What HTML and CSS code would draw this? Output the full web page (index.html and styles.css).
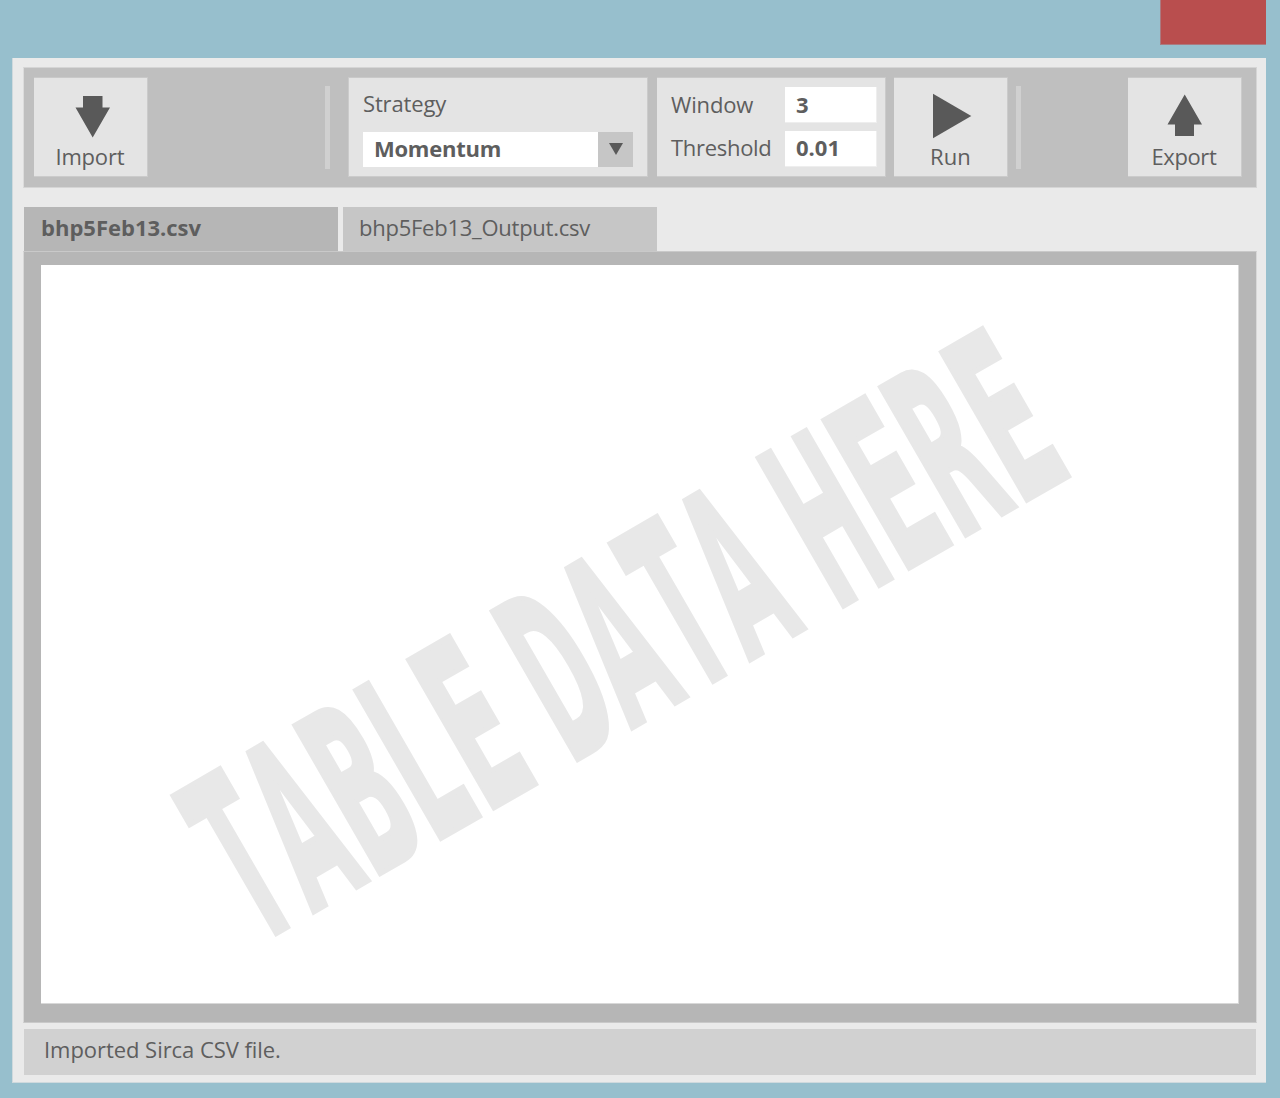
FILE: index.html
```
<!DOCTYPE html>
<html lang="en">
<head>
<meta charset="utf-8">
<title>Strategy runner</title>
<link rel="stylesheet" href="styles.css">
</head>
<body>
<header class="titlebar"><div class="close"></div></header>
<main class="window">
  <section class="toolbar">
    <div class="action import">
      <svg class="icon" width="114" height="62" viewBox="0 0 114 62"><path d="M49 18H68.500V29.500H76L58.700 59.500L41.500 29.500H49Z"/></svg>
      <span class="caption">Import</span>
    </div>
    <div class="divider first"></div>
    <div class="strategy">
      <label class="label">Strategy</label>
      <div class="select">
        <span class="value">Momentum</span>
        <span class="arrow"><svg class="icon" width="35" height="35" viewBox="0 0 35 35"><path d="M11 11H25L18 23Z"/></svg></span>
      </div>
    </div>
    <div class="params">
      <label class="label window-label">Window</label><div class="field">3</div>
      <label class="label threshold-label">Threshold</label><div class="field">0.01</div>
    </div>
    <div class="action run">
      <svg class="icon" width="113" height="62" viewBox="0 0 113 62"><path d="M39 15.700L77.300 38L39 60.300Z"/></svg>
      <span class="caption">Run</span>
    </div>
    <div class="divider second"></div>
    <div class="action export">
      <svg class="icon" width="113" height="62" viewBox="0 0 113 62"><path d="M56.700 16.500L74 46.500H66V58H47V46.500H39.500Z"/></svg>
      <span class="caption">Export</span>
    </div>
  </section>
  <nav class="tabs">
    <div class="tab active">bhp5Feb13.csv</div>
    <div class="tab output">bhp5Feb13_Output.csv</div>
  </nav>
  <section class="panel">
    <div class="sheet">
      <svg class="watermark" viewBox="41 265 1198 738" width="1198" height="738">
        <g transform="translate(256.3 947.3) rotate(-30)">
          <text transform="translate(1.600 -2) scale(0.850 2.342)">T</text>
          <text transform="translate(65.700 -2) scale(0.860 2.342)">A</text>
          <text transform="translate(134.300 -2) scale(0.935 2.342)">B</text>
          <text transform="translate(204.700 -2) scale(0.915 2.342)">L</text>
          <text transform="translate(265.100 -2) scale(0.979 2.342)">E</text>
          <text transform="translate(363 -2) scale(0.833 2.342)">D</text>
          <text transform="translate(433.600 -2) scale(0.860 2.342)">A</text>
          <text transform="translate(506.200 -2) scale(0.850 2.342)">T</text>
          <text transform="translate(569.800 -2) scale(0.860 2.342)">A</text>
          <text transform="translate(669.800 -2) scale(0.888 2.342)">H</text>
          <text transform="translate(744.600 -2) scale(0.979 2.342)">E</text>
          <text transform="translate(810.900 -2) scale(0.910 2.342)">R</text>
          <text transform="translate(880.700 -2) scale(0.979 2.342)">E</text>
        </g>
      </svg>
    </div>
  </section>
  <footer class="status">Imported Sirca CSV file.</footer>
</main>
</body>
</html>
```
FILE: styles.css
```
* { box-sizing: border-box; }
body {
  margin: 0;
  height: 1098px;
  background: #97bfcd;
  color: #5e5e5e;
  font: 22px/30px "Open Sans", "Noto Sans", sans-serif;
}
.titlebar { display: flex; justify-content: flex-end; height: 58px; padding-right: 14px; }
.close {
  width: 106px;
  height: 45px;
  background: #b94e4e;
  border: solid #ab7a80;
  border-width: 0 0 1px 1px;
}
.window {
  display: flex;
  flex-direction: column;
  width: 1254px;
  height: 1025px;
  margin-left: 12px;
  padding: 9px 9px 7px 11px;
  background: #eaeaea;
  border: solid #cfd9dd;
  border-width: 0 0 1px 1px;
}
.toolbar {
  display: flex;
  height: 121px;
  padding: 10px 14px 10px 10px;
  background: #bfbfbf;
  border: 1px solid #d5d5d5;
  border-left-color: #dcdcdc;
  margin-left: -1px;
}
.action, .strategy, .params {
  flex: none;
  height: 99px;
  background: #e4e4e4;
  border: solid #cbcbcb;
  border-width: 0 1px 1px 0;
  box-shadow: 0 -1px #c9c9c9;
}
.action { display: flex; flex-direction: column; width: 114px; }
.icon { display: block; fill: #595959; }
.caption { margin-top: 1px; white-space: nowrap; }
.import .caption { padding-left: 21.5px; letter-spacing: -0.2px; }
.run .caption { padding-left: 36px; letter-spacing: 0.1px; }
.export .caption { padding-left: 23.5px; letter-spacing: -0.4px; }
.divider { flex: none; width: 5px; height: 83px; margin-top: 8px; background: #d0d0d0; }
.divider.first { margin-left: 177px; margin-right: 18px; }
.divider.second { margin-left: 8px; }
.strategy { width: 300px; padding: 10px 0 0 14px; margin-right: 9px; border-left-width: 1px; }
.label { display: block; letter-spacing: -0.15px; }
.select { display: flex; width: 270px; height: 35px; margin-top: 14px; }
.value {
  width: 235px;
  padding: 1px 0 0 11px;
  background: #fff;
  font-weight: 700;
  letter-spacing: -0.25px;
}
.arrow { width: 35px; background: #c6c6c6; }
.params {
  display: grid;
  grid-template-columns: 114px 92px;
  grid-template-rows: 36px 36px;
  row-gap: 8px;
  width: 229px;
  padding: 9px 0 0 14px;
  margin-right: 8px;
}
.window-label { padding-top: 2px; }
.threshold-label { padding-top: 1px; letter-spacing: -0.3px; }
.field {
  padding: 2px 0 0 11px;
  background: #fff;
  border: solid #eee;
  border-width: 0 1px 1px 0;
  font-weight: 700;
}
.threshold-label + .field { padding-top: 1px; }
.export { margin-left: auto; }
.tabs { display: flex; gap: 5px; height: 44px; margin-top: 19px; }
.tab { width: 314px; padding: 5px 17px 0; background: #b6b6b6; }
.active { font-weight: 700; }
.output { background: #c6c6c6; padding-left: 16px; letter-spacing: -0.25px; }
.panel {
  height: 772px;
  margin-left: -1px;
  padding: 13px 17px 18px 17px;
  background: #b6b6b6;
  border: 1px solid #c9c9c9;
  border-left-color: #d8d8d8;
  border-right-color: #d8d8d8;
}
.panel, .toolbar { width: 1234px; }
.sheet {
  width: 1198px;
  height: 739px;
  background: #fff;
  border: solid #d8d8d8;
  border-width: 0 1px 1px 0;
}
.watermark { display: block; }
.watermark text {
  font: 700 100px "DejaVu Sans", sans-serif;
  fill: #e8e8e8;
  stroke: #e8e8e8;
  stroke-width: 4px;
  vector-effect: non-scaling-stroke;
}
.status {
  width: 1232px;
  height: 46px;
  margin-top: 6px;
  padding: 5px 20px;
  background: #d1d1d1;
  letter-spacing: -0.05px;
}
```
